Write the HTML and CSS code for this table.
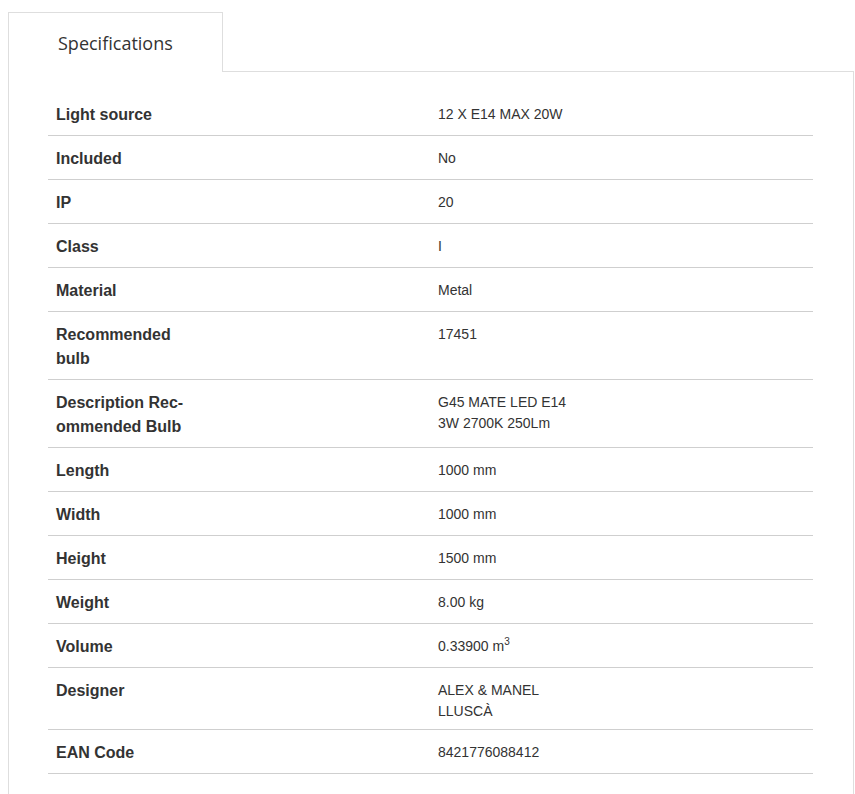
FILE: index.html
```html
<!DOCTYPE html>
<html lang="en">
<head>
<meta charset="utf-8">
<title>Specifications</title>
<link rel="stylesheet" href="styles.css">
</head>
<body>
<div class="tabs">
  <div class="tab">Specifications</div>
</div>
<div class="panel">
  <table class="specs">
    <tr><th><span class="lbl">Light source</span></th><td><span class="val">12 X E14 MAX 20W</span></td></tr>
    <tr><th><span class="lbl">Included</span></th><td><span class="val">No</span></td></tr>
    <tr><th><span class="lbl">IP</span></th><td><span class="val">20</span></td></tr>
    <tr><th><span class="lbl">Class</span></th><td><span class="val">I</span></td></tr>
    <tr><th><span class="lbl">Material</span></th><td><span class="val">Metal</span></td></tr>
    <tr><th><span class="lbl">Recommended bulb</span></th><td><span class="val">17451</span></td></tr>
    <tr><th><span class="lbl">Description Rec&shy;ommended Bulb</span></th><td><span class="val">G45 MATE LED E14 3W 2700K 250Lm</span></td></tr>
    <tr><th><span class="lbl">Length</span></th><td><span class="val">1000 mm</span></td></tr>
    <tr><th><span class="lbl">Width</span></th><td><span class="val">1000 mm</span></td></tr>
    <tr><th><span class="lbl">Height</span></th><td><span class="val">1500 mm</span></td></tr>
    <tr><th><span class="lbl">Weight</span></th><td><span class="val">8.00 kg</span></td></tr>
    <tr><th><span class="lbl">Volume</span></th><td><span class="val">0.33900 m<sup>3</sup></span></td></tr>
    <tr><th><span class="lbl">Designer</span></th><td><span class="val">ALEX &amp; MANEL LLUSCÀ</span></td></tr>
    <tr><th><span class="lbl">EAN Code</span></th><td><span class="val">8421776088412</span></td></tr>
  </table>
</div>
</body>
</html>
```
FILE: styles.css
```css
html, body {
  background: #fff;
}
body {
  margin: 12px 1px 0 8px;
  font-family: "Liberation Sans", Arial, sans-serif;
  color: #333;
}
.tabs {
  display: flex;
}
.tab {
  height: 60px;
  box-sizing: border-box;
  border: 1px solid #dedede;
  border-bottom: none;
  background: #fff;
  padding: 18px 0 0 49px;
  font-family: "Open Sans", sans-serif;
  font-size: 18px;
  line-height: 24px;
  color: #333;
  margin-bottom: -1px;
  position: relative;
  z-index: 1;
  flex: 0 0 215px;
}
.panel {
  border: 1px solid #dedede;
  padding: 20px 40px 30px 39px;
  min-height: 700px;
}
.specs {
  width: 100%;
  border-collapse: collapse;
}
.specs tr {
  border-bottom: 1px solid #cfcfcf;
}
.specs th, .specs td {
  text-align: left;
  vertical-align: top;
  padding: 11px 8px 8px;
}
.specs th {
  width: 366px;
  font-size: 16px;
  font-weight: bold;
  line-height: 24px;
}
.specs td {
  font-size: 14px;
  line-height: 21px;
  padding-top: 12px;
  padding-bottom: 7px;
}
.lbl, .val {
  display: block;
  width: 140px;
}
sup {
  font-size: 10px;
  line-height: 0;
  vertical-align: 6px;
}
```
